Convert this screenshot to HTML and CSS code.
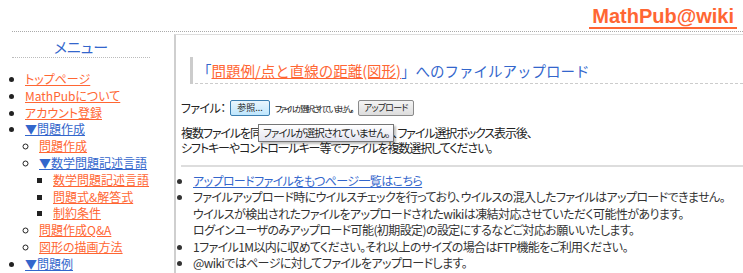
FILE: index.html
```html
<!DOCTYPE html>
<html lang="ja">
  <head>
    <meta charset="UTF-8" />
    <title>MathPub@wiki - ファイルアップロード</title>
    <link rel="stylesheet" href="styles.css">
  </head>
  <body>
    <div class="site-header">
      <a class="site-title" href="#">MathPub@wiki</a>
    </div>

    <div class="layout">
      <div class="menu">
        <h3 class="menu-title">メニュー</h3>
        <ul class="menu-list">
          <li><a href="#">トップページ</a></li>
          <li><a href="#">MathPubについて</a></li>
          <li><a href="#">アカウント登録</a></li>
          <li>
            <a class="fold" href="#">▼問題作成</a>
            <ul>
              <li><a href="#">問題作成</a></li>
              <li>
                <a class="fold" href="#">▼数学問題記述言語</a>
                <ul>
                  <li><a href="#">数学問題記述言語</a></li>
                  <li><a href="#">問題式&amp;解答式</a></li>
                  <li><a href="#">制約条件</a></li>
                </ul>
              </li>
              <li><a href="#">問題作成Q&amp;A</a></li>
              <li><a href="#">図形の描画方法</a></li>
            </ul>
          </li>
          <li><a class="fold" href="#">▼問題例</a></li>
        </ul>
      </div>

      <div class="main">
        <h2 class="page-title">「<a href="#">問題例/点と直線の距離(図形)</a>」へのファイルアップロード</h2>

        <div class="upload-form">
          <span class="label">ファイル：</span>
          <span class="btn btn-browse">参照...</span>
          <span class="no-file">ファイルが選択されていません。</span>
          <span class="btn">アップロード</span>
          <div class="tooltip">ファイルが選択されていません。</div>
        </div>

        <p class="note">
          複数ファイルを同時にアップロードする場合は、ファイル選択ボックス表示後、<br>
          シフトキーやコントロールキー等でファイルを複数選択してください。
        </p>

        <hr>

        <ul class="info">
          <li><a href="#">アップロードファイルをもつページ一覧はこちら</a></li>
          <li>
            ファイルアップロード時にウイルスチェックを行っており、ウイルスの混入したファイルはアップロードできません。<br>
            ウイルスが検出されたファイルをアップロードされたwikiは凍結対応させていただく可能性があります。<br>
            ログインユーザのみアップロード可能(初期設定)の設定にするなどご対応お願いいたします。
          </li>
          <li>1ファイル1M以内に収めてください。それ以上のサイズの場合はFTP機能をご利用ください。</li>
          <li>@wikiではページに対してファイルをアップロードします。</li>
        </ul>
      </div>
    </div>
  </body>
</html>
```

FILE: styles.css
```css
* {
  margin: 0;
  padding: 0;
  box-sizing: border-box;
}

body {
  font-family: "Noto Sans CJK JP", "Liberation Sans", sans-serif;
  font-size: 12px;
  color: #222;
  background-color: #fff;
  font-feature-settings: "palt";
  overflow: hidden;
}

a {
  color: #ff6633;
}

.site-header {
  height: 32px;
  margin-left: 12px;
  padding-right: 6px;
  border-bottom: 1px dotted #aaa;
  display: flex;
  justify-content: flex-end;
  align-items: flex-start;
}

.site-title {
  font-family: "Liberation Sans", sans-serif;
  font-size: 20px;
  font-weight: bold;
  line-height: 22px;
  margin-top: 5px;
  padding: 0 3px;
  text-decoration: none;
  border-bottom: 2px solid #ff6633;
  color: #ff6633;
}

.layout {
  display: flex;
  margin-top: 2px;
}

.menu {
  width: 174px;
  flex-shrink: 0;
  padding-top: 3px;
}

.menu-title {
  margin: 0 24px 0 12px;
  font-size: 15px;
  font-weight: normal;
  color: #3366cc;
  text-align: center;
  line-height: 20px;
  border-bottom: 1px dotted #bbb;
}

.menu-list {
  margin-top: 13px;
  padding-left: 25px;
  line-height: 16.8px;
}

.menu-list ul {
  padding-left: 14px;
  list-style-type: circle;
}

.menu-list ul ul {
  list-style-type: square;
}

.menu-list .fold {
  color: #3366cc;
}

.main {
  flex: 1;
  position: relative;
  border-left: 2px solid #cfcfcf;
  border-top: 1px solid #ddd;
  padding: 22px 0 0 5px;
  min-height: 300px;
  letter-spacing: -0.6px;
}

.page-title {
  margin-left: 9px;
  padding: 4px 0 2px 4px;
  font-size: 14.5px;
  font-weight: normal;
  line-height: 20px;
  letter-spacing: 0;
  font-feature-settings: normal;
  color: #3366cc;
  border-left: 3px solid #ccc;
  border-bottom: 1px dashed #ccc;
}

.upload-form {
  margin-top: 15px;
  display: flex;
  align-items: center;
  height: 17px;
}

.label {
  width: 49px;
}

.btn {
  display: inline-block;
  height: 16px;
  padding: 0 5px;
  font-size: 9px;
  line-height: 14px;
  letter-spacing: -0.8px;
  white-space: nowrap;
  text-align: center;
  border: 1px solid #8a8a8a;
  border-radius: 2px;
  background: linear-gradient(#f4f4f4, #dddddd);
  color: #222;
}

.btn-browse {
  width: 40px;
  padding: 0;
  letter-spacing: 0;
  border-color: #3c7fb1;
  background: linear-gradient(#eaf6fd, #bee6fd);
}

.no-file {
  font-size: 8.5px;
  letter-spacing: -2.5px;
  white-space: nowrap;
  margin: 0 6px 0 5px;
}

.tooltip {
  position: absolute;
  left: 82px;
  top: 89px;
  height: 18px;
  padding: 0 4px;
  font-size: 10.5px;
  line-height: 16px;
  letter-spacing: -1px;
  border: 1px solid #767676;
  background: linear-gradient(#ffffff, #e4e5f0);
  box-shadow: 2px 2px 2px rgba(0, 0, 0, 0.25);
}

.note {
  margin-top: 9px;
  font-size: 12px;
  line-height: 15px;
  letter-spacing: -1.1px;
}

hr {
  margin: 10px 0 6px 0;
  border: none;
  border-top: 2px solid #ddd;
}

.info {
  padding-left: 12px;
  line-height: 16.4px;
  color: #333;
}

.info a {
  color: #3366cc;
}
```
